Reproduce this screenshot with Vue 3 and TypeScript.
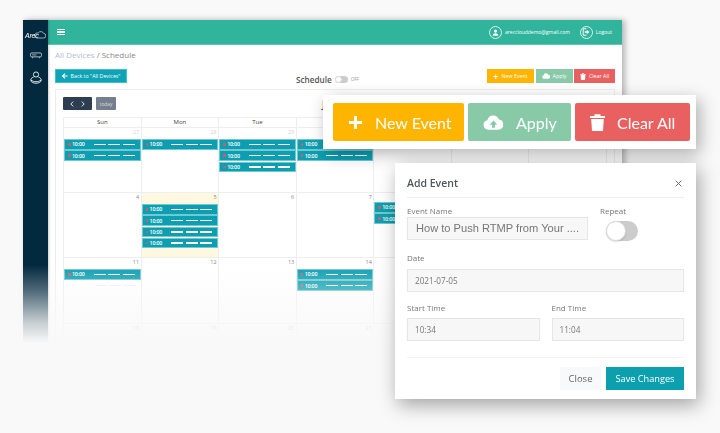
<script setup lang="ts">
interface Cell { d: number | string; events: number; today?: boolean; up?: boolean; ghost?: boolean; old?: boolean }
const days: string[] = ['Sun', 'Mon', 'Tue', '', '', '', '']
const counts: Record<number, number> = { 27: 2, 28: 1, 29: 3, 30: 2, 5: 4, 8: 2, 11: 1, 14: 2 }
const starts: number[] = [27, 4, 11, 18]
const cells: Cell[] = starts.flatMap((s, r) =>
  days.map((_, i) => {
    const d = s + i
    const covered = r === 0 && i >= 3
    return {
      d: covered ? '' : d,
      events: r === 0 && i > 3 ? 0 : counts[d] ?? 0,
      today: d === 5 && r === 1,
      up: d === 8,
      ghost: d === 11,
      old: r === 0
    }
  })
)
</script>

<template>
  <div class="stage">
    <div class="window">
      <aside class="side">
        <div class="logo">
          <span class="logo-text">Arec</span>
          <svg class="logo-cloud" viewBox="0 0 14 9" width="12" height="8"><path d="M3 8h8a2.600 2.600 0 0 0 .4-5.200A3.600 3.600 0 0 0 5 2.200 3 3 0 0 0 3 8z" fill="none" stroke="#fff" stroke-width=".7"/></svg>
        </div>
        <svg class="ic-proj" viewBox="0 0 14 8" width="12" height="7"><rect x=".6" y="1" width="12.800" height="4.600" rx="1.400" fill="none" stroke="#dfe6ea" stroke-width=".9"/><path d="M3 6v1.300M11 6v1.300M2.500 3.300h5" stroke="#dfe6ea" stroke-width=".8"/></svg>
        <svg class="ic-user" viewBox="0 0 14 15" width="12" height="13"><circle cx="7" cy="4" r="3" fill="none" stroke="#fff" stroke-width="1"/><path d="M4.400 6.800C1.800 7.800.7 9.400.9 10.900c.3 1.900 3 3.300 6.100 3.300s5.800-1.400 6.100-3.300c.2-1.500-.9-3.100-3.500-4.100M1.200 10.500c1.500 1.300 3.600 1.900 5.800 1.900s4.300-.6 5.800-1.900" fill="none" stroke="#fff" stroke-width="1"/></svg>
      </aside>
      <div class="main">
        <header class="top">
          <span class="burger"><i></i><i></i><i></i></span>
          <div class="top-right">
            <span class="circle"><svg viewBox="0 0 10 10" width="7" height="7"><circle cx="5" cy="3" r="2.200" fill="#fff"/><path d="M1 9.500c0-2.400 1.800-3.500 4-3.500s4 1.100 4 3.500z" fill="#fff"/></svg></span>
            <span class="top-txt mail">arecclouddemo@gmail.com</span>
            <span class="circle"><svg viewBox="0 0 10 10" width="8" height="8"><path d="M5.500 1H1.500v8h4" fill="none" stroke="#fff" stroke-width="1.200"/><path d="M3.500 4h2.500V2.200L9.300 5 6 7.800V6H3.500z" fill="#fff"/></svg></span>
            <span class="top-txt">Logout</span>
          </div>
        </header>
        <div class="content">
          <div class="crumb"><span class="crumb-a">All Devices</span> / Schedule</div>
          <div class="bar">
            <button class="mini back">
              <svg viewBox="0 0 10 10" width="6" height="6"><path d="M5 1 1 5l4 4M1.500 5H9.500" fill="none" stroke="#fff" stroke-width="1.800"/></svg>
              Back to "All Devices"
            </button>
            <div class="sched">
              <strong>Schedule</strong>
              <span class="sw"><i></i></span>
              <span class="off">OFF</span>
            </div>
            <div class="mini-group">
              <button class="mini yellow"><span class="mini-ic">+</span> New Event</button>
              <button class="mini green">
                <svg viewBox="0 0 20 14" width="8" height="6"><path d="M5 14a4.500 4.500 0 0 1-.8-8.900A5.800 5.800 0 0 1 15.300 4 5 5 0 0 1 15.500 14z" fill="#fff"/></svg>
                Apply
              </button>
              <button class="mini red">
                <svg viewBox="0 0 10 12" width="6" height="7"><path d="M0 1.500h3.300V.4h3.400v1.100H10v1.300H0zM1 3.500h8l-.5 8.500h-7z" fill="#fff"/></svg>
                Clear All
              </button>
            </div>
          </div>
          <section class="card">
            <div class="cal-bar">
              <div class="nav">
                <svg viewBox="0 0 6 10" width="4" height="6"><path d="M5 1 1 5l4 4" fill="none" stroke="#fff" stroke-width="1.500"/></svg>
                <svg viewBox="0 0 6 10" width="4" height="6"><path d="m1 1 4 4-4 4" fill="none" stroke="#fff" stroke-width="1.500"/></svg>
              </div>
              <span class="today-btn">today</span>
              <span class="month">J</span>
            </div>
            <div class="grid">
              <div v-for="(d, i) in days" :key="i" class="head">{{ d }}</div>
              <div v-for="(c, i) in cells" :key="i" class="cell" :class="{ today: c.today, up: c.up }">
                <div class="num" :class="{ old: c.old }">{{ c.d }}</div>
                <div v-for="n in c.events" :key="n" class="ev">
                  <i class="dot"></i><span class="time">10:00</span>
                  <span class="dash"><b></b><b></b><b></b></span>
                </div>
                <div v-if="c.ghost" class="ghost"><b></b><b></b><b></b></div>
              </div>
            </div>
          </section>
        </div>
      </div>
      <div class="fade"></div>
    </div>

    <div class="pop">
      <button class="big b-yellow">
        <svg viewBox="0 0 16 16" width="15" height="15"><path d="M8 1v14M1 8h14" stroke="#fff" stroke-width="3"/></svg>
        <span>New Event</span>
      </button>
      <button class="big b-green">
        <svg viewBox="0 0 22 15" width="21" height="15"><path fill-rule="evenodd" d="M5.500 15A5 5 0 0 1 4.600 5.100 6.300 6.300 0 0 1 16.600 4.300 5.400 5.400 0 0 1 16.500 15zM11 5.500 7 9.800h2.500V13h3V9.800H15z" fill="#fff"/></svg>
        <span>Apply</span>
      </button>
      <button class="big b-red">
        <svg viewBox="0 0 15 17" width="15" height="17"><path d="M0 2h4.500V.3h6V2H15v2H0zM1.200 5h12.600l-.8 12H2z" fill="#fff"/></svg>
        <span>Clear All</span>
      </button>
    </div>

    <div class="modal">
      <div class="m-head">
        <span class="m-title">Add Event</span>
        <svg viewBox="0 0 8 8" width="7" height="7"><path d="m.8.8 6.400 6.400M7.200.8.800 7.200" stroke="#666" stroke-width="1.100"/></svg>
      </div>
      <div class="m-row first">
        <div class="f-name">
          <label>Event Name</label>
          <div class="input name">How to Push RTMP from Your ....</div>
        </div>
        <div class="f-repeat">
          <label>Repeat</label>
          <span class="big-sw"><i></i></span>
        </div>
      </div>
      <div class="field">
        <label>Date</label>
        <div class="input">2021-07-05</div>
      </div>
      <div class="m-row times">
        <div class="f-half"><label>Start Time</label><div class="input">10:34</div></div>
        <div class="f-half"><label>End Time</label><div class="input">11:04</div></div>
      </div>
      <div class="m-foot">
        <button class="close">Close</button>
        <button class="save">Save Changes</button>
      </div>
    </div>
  </div>
</template>

<style>
html, body { margin: 0; background: #f9f9f9; }
</style>

<style scoped>
* { box-sizing: border-box; }
button { font-family: inherit; border: 0; margin: 0; padding: 0; }
.stage {
  position: relative;
  width: 720px;
  height: 433px;
  overflow: hidden;
  padding: 20px 98px 0 23px;
  background: #f9f9f9;
  font-family: "Open Sans", "Liberation Sans", sans-serif;
  color: #555;
}
.window {
  position: relative;
  display: flex;
  height: 325px;
  box-shadow: 3px 0 6px rgba(0, 0, 0, .28);
  filter: blur(.3px);
}
.side {
  width: 25px;
  background: #03293f;
  display: flex;
  flex-direction: column;
  align-items: center;
  flex: none;
  box-shadow: 1px 0 2px rgba(0, 0, 0, .2);
  z-index: 1;
}
.logo {
  position: relative;
  height: 25px;
  width: 25px;
  display: flex;
  align-items: center;
}
.logo-text { color: #fff; font: italic 7px/1 "Liberation Sans", sans-serif; margin-left: 2px; letter-spacing: -.2px; margin-top: 5px; }
.logo-cloud { position: absolute; left: 11px; top: 11px; }
.ic-proj { display: block; margin-top: 7px; }
.ic-user { display: block; margin-top: 12px; }
.main { flex: 1; min-width: 0; background: #fff; display: flex; flex-direction: column; }
.top {
  height: 25px;
  flex: none;
  background: #31b49c;
  border-bottom: 1px solid #5dc7b3;
  display: flex;
  align-items: center;
  justify-content: space-between;
  padding: 0 10px 0 9px;
}
.burger { display: flex; flex-direction: column; gap: 1.500px; width: 8px; }
.burger i { height: 1.300px; background: #fff; display: block; }
.top-right { display: flex; align-items: center; color: #fff; }
.circle {
  width: 13px;
  height: 13px;
  border: 1px solid rgba(255, 255, 255, .8);
  border-radius: 50%;
  display: flex;
  align-items: center;
  justify-content: center;
}
.top-txt { font-size: 5px; margin-left: 3px; }
.mail { margin-right: 10px; }
.content { padding: 0 7px; flex: 1; min-height: 0; overflow: hidden; }
.crumb { font-size: 8px; line-height: 11px; margin-top: 4px; color: #888; height: 20px; }
.crumb-a { color: #b4bdcc; }
.bar { display: flex; height: 14px; align-items: center; }
.mini {
  height: 14px;
  display: inline-flex;
  align-items: center;
  justify-content: center;
  gap: 3px;
  font-size: 5.300px;
  color: #fff;
}
.back { width: 72px; background: #0ea3b5; border: 1px solid #3fc0cf; }
.sched { margin-left: 169px; display: flex; align-items: center; margin-top: 6px; }
.sched strong { font-size: 8.200px; color: #555; font-weight: 600; }
.sw { width: 13px; height: 7px; background: #ccc; border-radius: 4px; margin-left: 3px; position: relative; display: block; }
.sw i { position: absolute; left: 0; top: 0; width: 7px; height: 7px; border-radius: 50%; background: #fff; border: 1px solid #ddd; }
.off { font-size: 4.500px; color: #999; margin-left: 3px; }
.mini-group { margin-left: auto; display: flex; gap: 1.500px; }
.mini-ic { font-size: 9px; font-weight: 700; line-height: 1; }
.yellow { width: 47px; background: #ffb400; }
.green { width: 37px; background: #88c9a8; }
.red { width: 41px; background: #e86060; }
.card {
  margin-top: 6px;
  border: 1px solid #eee;
  padding: 7px 7px 0;
  height: 300px;
}
.cal-bar { display: flex; align-items: center; height: 13px; margin-bottom: 7px; }
.nav {
  width: 29px;
  height: 12.500px;
  background: #2c3e50;
  border-radius: 1px;
  display: flex;
  align-items: center;
  justify-content: space-around;
  padding: 0 3px;
}
.today-btn {
  width: 20px;
  height: 12.500px;
  background: #757f8d;
  color: #ddd;
  font-size: 4.800px;
  display: flex;
  align-items: center;
  justify-content: center;
  margin-left: 4px;
  border-radius: 1px;
}
.month { margin-left: 206px; font-size: 10px; font-weight: 600; color: #555; white-space: nowrap; }
.grid {
  display: grid;
  grid-template-columns: repeat(7, 1fr);
  grid-template-rows: 10px 65px 65px 66px 65px;
  border-top: 1px solid #eee;
  border-left: 1px solid #eee;
}
.head {
  border-right: 1px solid #eee;
  border-bottom: 1px solid #eee;
  font-size: 6px;
  line-height: 9px;
  text-align: center;
  font-weight: 500;
  color: #444;
}
.cell {
  border-right: 1px solid #eee;
  border-bottom: 1px solid #eee;
  overflow: hidden;
}
.cell.today { background: #fdf8df; }
.cell.up .num { margin-bottom: -2px; }
.num { height: 11px; font-size: 5.500px; line-height: 9px; text-align: right; padding-right: 1.500px; color: #888; }
.num.old { color: #d4d4d4; }
.ev {
  height: 10.500px;
  background: #0d9fb1;
  border: .5px solid #6fc8d2;
  margin-bottom: .8px;
  display: flex;
  align-items: center;
  padding-left: 3px;
  color: #fff;
}
.dot { width: 2.500px; height: 2.500px; background: #ef5350; border-radius: 50%; flex: none; }
.time { font-size: 5.300px; font-weight: 600; margin-left: 1.500px; letter-spacing: -.2px; }
.dash { margin-left: auto; margin-right: 5px; display: flex; gap: 2.500px; }
.dash b { width: 12px; height: 1.500px; background: #fff; display: block; }
.ghost { display: flex; gap: 2.500px; justify-content: flex-end; padding-right: 5px; margin-top: 5px; }
.ghost b { width: 12px; height: 1px; background: #f0f0f0; }
.fade {
  position: absolute;
  z-index: 2;
  left: -2px;
  right: -12px;
  top: 245px;
  height: 100px;
  background: linear-gradient(to bottom, rgba(249, 249, 249, 0), rgba(249, 249, 249, .3) 25%, rgba(249, 249, 249, .8) 58%, #f9f9f9 78%);
  pointer-events: none;
}
.pop {
  position: absolute;
  left: 323px;
  top: 95px;
  width: 373px;
  height: 54px;
  background: #fff;
  display: flex;
  gap: 4px;
  padding: 8px 0 0 10px;
  box-shadow: 4px 5px 16px rgba(0, 0, 0, .3);
  filter: blur(.2px);
}
.big {
  height: 38px;
  border-radius: 2px;
  color: #fff;
  font-family: Lato, "Open Sans", sans-serif;
  font-size: 16px;
  display: flex;
  align-items: center;
}
.big span { display: block; }
.b-yellow { width: 131px; background: #ffb400; padding-left: 15px; gap: 12px; }
.b-green { width: 103px; background: #88c9a8; padding-left: 15px; gap: 12px; }
.b-red { width: 115px; background: #e86060; padding-left: 15px; gap: 12px; }
.modal {
  position: absolute;
  left: 395px;
  top: 163px;
  width: 301px;
  height: 236px;
  background: #fff;
  padding: 0 12px;
  box-shadow: 3px 6px 18px rgba(0, 0, 0, .35);
  filter: blur(.2px);
}
.m-head {
  height: 35px;
  padding-top: 6px;
  border-bottom: 1px solid #eee;
  display: flex;
  justify-content: space-between;
  align-items: center;
  padding-right: 2px;
}
.m-title { font-size: 10.500px; font-weight: 600; color: #50565c; }
label { display: block; font-size: 8px; line-height: 12px; color: #777; }
.m-row { display: flex; }
.first { margin-top: 7px; }
.f-name { width: 181px; }
.f-repeat { margin-left: 12px; }
.input {
  height: 23px;
  background: #f7f7f7;
  border: 1px solid #e6e6e6;
  font-size: 8.200px;
  line-height: 21px;
  padding-left: 7px;
  color: #777;
}
.name { font: 11.100px/21px "Liberation Sans", sans-serif; padding-left: 8px; white-space: nowrap; overflow: hidden; }
.big-sw { display: block; width: 32px; height: 20px; border-radius: 10px; background: #ccc; margin: 4px 0 0 6px; position: relative; }
.big-sw i { position: absolute; left: 0; top: 0; width: 20px; height: 20px; background: #fff; border: 1px solid #ddd; border-radius: 50%; box-shadow: 0 1px 2px rgba(0,0,0,.15); }
.field { margin-top: 11px; }
.field label { margin-bottom: 5px; }
.times { margin-top: 10px; gap: 12px; }
.f-half { flex: 1; }
.f-half label { margin-bottom: 4px; }
.m-foot {
  margin-top: 16px;
  border-top: 1px solid #eef2f2;
  padding-top: 9px;
  display: flex;
  justify-content: flex-end;
  gap: 5px;
}
.close { width: 41px; height: 23px; background: #f8f9fa; color: #666; font-size: 9.500px; }
.save { width: 78px; height: 23px; background: #0c9fae; color: #fff; font-size: 9.200px; font-weight: 500; }
</style>
